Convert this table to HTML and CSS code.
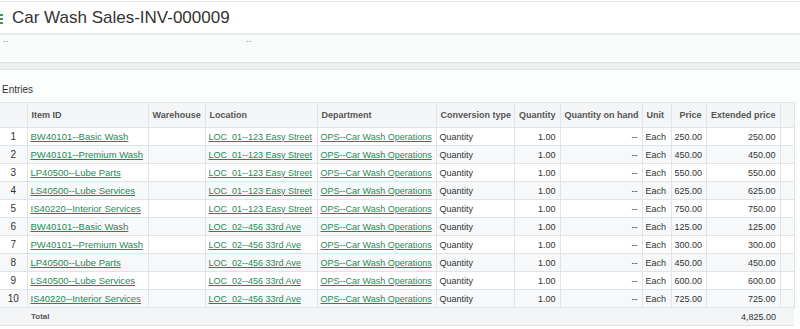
FILE: index.html
```html
<!DOCTYPE html>
<html>
<head>
    <title>Car Wash Sales-INV-000009</title>
    <meta charset="utf-8">
    <link rel="stylesheet" href="styles.css">
</head>
<body>
    <div class="page-header">
        <svg class="grip" width="4" height="10" viewBox="0 0 4 10">
            <rect x="0" y="0" width="3" height="2" fill="#2e9a5b"/>
            <rect x="0" y="4" width="3" height="2" fill="#2e9a5b"/>
            <rect x="0" y="8" width="3" height="2" fill="#2e9a5b"/>
        </svg>
        <h1>Car Wash Sales-INV-000009</h1>
    </div>
    <div class="info-strip">
        <span class="info-field">--</span>
        <span class="info-field">--</span>
    </div>
    <div class="divider-band"></div>
    <div class="entries">
        <h2>Entries</h2>
        <table class="grid">
            <colgroup>
                <col style="width:27px">
                <col style="width:121px">
                <col style="width:57px">
                <col style="width:112px">
                <col style="width:119px">
                <col style="width:78px">
                <col style="width:46px">
                <col style="width:82px">
                <col style="width:29px">
                <col style="width:35px">
                <col style="width:74px">
                <col style="width:14px">
            </colgroup>
            <thead>
                <tr>
                    <th></th>
                    <th class="left">Item ID</th>
                    <th class="left">Warehouse</th>
                    <th class="left">Location</th>
                    <th class="left">Department</th>
                    <th class="left">Conversion type</th>
                    <th>Quantity</th>
                    <th>Quantity on hand</th>
                    <th class="left">Unit</th>
                    <th>Price</th>
                    <th>Extended price</th>
                    <th></th>
                </tr>
            </thead>
            <tbody id="rows"></tbody>
            <tfoot>
                <tr>
                    <td></td>
                    <td class="total-label">Total</td>
                    <td></td><td></td><td></td><td></td><td></td><td></td><td></td><td></td>
                    <td class="num">4,825.00</td>
                    <td></td>
                </tr>
            </tfoot>
        </table>
    </div>

    <script>
        const entries = [
            ['BW40101--Basic Wash', 'LOC_01--123 Easy Street', '250.00'],
            ['PW40101--Premium Wash', 'LOC_01--123 Easy Street', '450.00'],
            ['LP40500--Lube Parts', 'LOC_01--123 Easy Street', '550.00'],
            ['LS40500--Lube Services', 'LOC_01--123 Easy Street', '625.00'],
            ['IS40220--Interior Services', 'LOC_01--123 Easy Street', '750.00'],
            ['BW40101--Basic Wash', 'LOC_02--456 33rd Ave', '125.00'],
            ['PW40101--Premium Wash', 'LOC_02--456 33rd Ave', '300.00'],
            ['LP40500--Lube Parts', 'LOC_02--456 33rd Ave', '450.00'],
            ['LS40500--Lube Services', 'LOC_02--456 33rd Ave', '600.00'],
            ['IS40220--Interior Services', 'LOC_02--456 33rd Ave', '725.00']
        ];

        const tbody = document.getElementById('rows');
        entries.forEach((entry, i) => {
            const tr = document.createElement('tr');
            tr.innerHTML =
                '<td class="line">' + (i + 1) + '</td>' +
                '<td><a href="#" class="item-link">' + entry[0] + '</a></td>' +
                '<td></td>' +
                '<td><a href="#">' + entry[1] + '</a></td>' +
                '<td><a href="#">OPS--Car Wash Operations</a></td>' +
                '<td>Quantity</td>' +
                '<td class="num">1.00</td>' +
                '<td class="num">--</td>' +
                '<td>Each</td>' +
                '<td class="num">' + entry[2] + '</td>' +
                '<td class="num">' + entry[2] + '</td>' +
                '<td></td>';
            tbody.appendChild(tr);
        });
    </script>
</body>
</html>
```

FILE: styles.css
```css
body {
    margin: 0;
    font-family: "Liberation Sans", Arial, sans-serif;
    color: #333;
    background-color: #fff;
}
.page-header {
    display: flex;
    align-items: center;
    height: 31px;
    margin-top: 1px;
    border-top: 1px solid #e2e6e9;
    border-bottom: 2px solid #e9ecee;
}
.grip {
    margin-top: 2px;
}
.page-header h1 {
    margin: 0 0 0 8px;
    font-size: 17px;
    font-weight: normal;
    color: #333;
}
.info-strip {
    display: flex;
    height: 27px;
    background-color: #fafbfb;
    border-bottom: 1px solid #dfe3e6;
    font-size: 8px;
    color: #888;
}
.info-field {
    width: 240px;
    padding: 1px 0 0 3px;
}
.divider-band {
    height: 6px;
    background-color: #eceef0;
    border-bottom: 1px solid #e4e7ea;
}
.entries {
    background-color: #fcfdfd;
    padding-top: 14px;
}
.entries h2 {
    margin: 0 0 7px 2px;
    font-size: 10px;
    font-weight: normal;
    color: #333;
}
.grid {
    width: 794px;
    table-layout: fixed;
    border-collapse: collapse;
    font-size: 9px;
}
.grid th,
.grid td {
    border: 1px solid #e0e4e7;
    white-space: nowrap;
    overflow: hidden;
    padding: 0 3px;
    height: 17px;
}
.grid tr > :first-child {
    border-left: none;
}
.grid thead th {
    height: 24px;
    background-color: #f4f5f6;
    font-weight: bold;
    color: #555;
    text-align: right;
    padding: 0 4px;
}
.grid th.left {
    text-align: left;
}
.grid tbody tr {
    background-color: #fff;
}
.grid tbody tr:nth-child(even) {
    background-color: #f7f8f9;
}
.grid td.line {
    text-align: center;
    font-size: 10px;
}
.grid td.num {
    text-align: right;
    padding-right: 4px;
}
.grid a {
    color: #1f8a56;
    text-decoration: underline;
    font-size: 9px;
}
.grid a.item-link {
    font-size: 9.5px;
}
.grid tfoot td {
    background-color: #f4f5f6;
    border-left: none;
    border-right: none;
}
.grid td.total-label {
    font-weight: bold;
    color: #555;
    font-size: 8px;
    padding-left: 4px;
}
```
